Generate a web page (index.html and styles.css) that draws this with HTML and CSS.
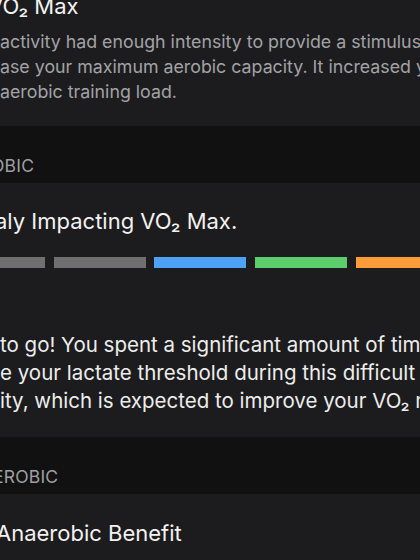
FILE: index.html
```html
<!DOCTYPE html>
<html lang="en">
<head>
<meta charset="utf-8">
<title>Training Effect</title>
<link rel="stylesheet" href="styles.css">
</head>
<body>
<main class="screen">
  <section class="card card-first">
    <div class="title cut-v">VO₂ Max</div>
    <div class="desc muted">
      <div class="line">activity had enough intensity to provide a stimulus to</div>
      <div class="line">ase your maximum aerobic capacity. It increased your</div>
      <div class="line">aerobic training load.</div>
    </div>
  </section>

  <header class="band"><span class="band-label cut-o">OBIC</span></header>

  <section class="card card-mid">
    <div class="title cut-a">aly Impacting VO₂ Max.</div>
    <div class="scale">
      <span class="seg seg-gray"></span>
      <span class="seg seg-gray"></span>
      <span class="seg seg-blue"></span>
      <span class="seg seg-green"></span>
      <span class="seg seg-orange"></span>
    </div>
    <div class="desc bright">
      <div class="line">to go! You spent a significant amount of time</div>
      <div class="line">e your lactate threshold during this difficult</div>
      <div class="line">ity, which is expected to improve your VO₂ max.</div>
    </div>
  </section>

  <header class="band"><span class="band-label cut-e">EROBIC</span></header>

  <section class="card card-last">
    <div class="title cut-an">Anaerobic Benefit</div>
  </section>
</main>
</body>
</html>
```

FILE: styles.css
```css
html, body {
  margin: 0;
  padding: 0;
  background: #111111;
  overflow: hidden;
}

.screen {
  width: 420px;
  height: 560px;
  overflow: hidden;
  font-family: Inter, "Noto Sans", "Liberation Sans", sans-serif;
  -webkit-font-smoothing: antialiased;
}

.card {
  background: #1c1c1e;
  display: flex;
  flex-direction: column;
}

.line,
.title,
.band-label {
  white-space: nowrap;
}

.title {
  font-size: 22px;
  line-height: 26px;
  color: #f2f2f2;
}

.card-first {
  height: 126px;
}

.card-first .title {
  margin-top: -7px;
}

.card-first .desc {
  margin-top: 10px;
}

.muted {
  font-size: 17.8px;
  line-height: 25px;
  color: #a3a3a6;
}

.bright {
  font-size: 20.5px;
  line-height: 28px;
  color: #ededed;
}

.band {
  height: 57px;
  box-sizing: border-box;
  padding-top: 30px;
  background: #111111;
}

.band-label {
  display: block;
  font-size: 17.5px;
  line-height: 20px;
  color: #a0a0a3;
  letter-spacing: 0.2px;
}

.card-mid {
  height: 254px;
}

.card-mid .title {
  margin-top: 25px;
}

.scale {
  display: flex;
  gap: 8.7px;
  margin-top: 23px;
  margin-left: -47px;
}

.seg {
  flex: 0 0 92px;
  height: 11px;
}

.seg-gray { background: #6f6f70; }
.seg-blue { background: #4ea2f6; }
.seg-green { background: #5ccd6d; }
.seg-orange { background: #fd9c39; }

.card-mid .desc {
  margin-top: 63px;
}

.card-last {
  height: 66px;
}

.card-last .title {
  margin-top: 26px;
}

.cut-v { margin-left: -12px; }
.cut-a { margin-left: -5px; }
.cut-o { margin-left: -9px; }
.cut-e { margin-left: -7px; }
.cut-an { margin-left: -4px; }
```
